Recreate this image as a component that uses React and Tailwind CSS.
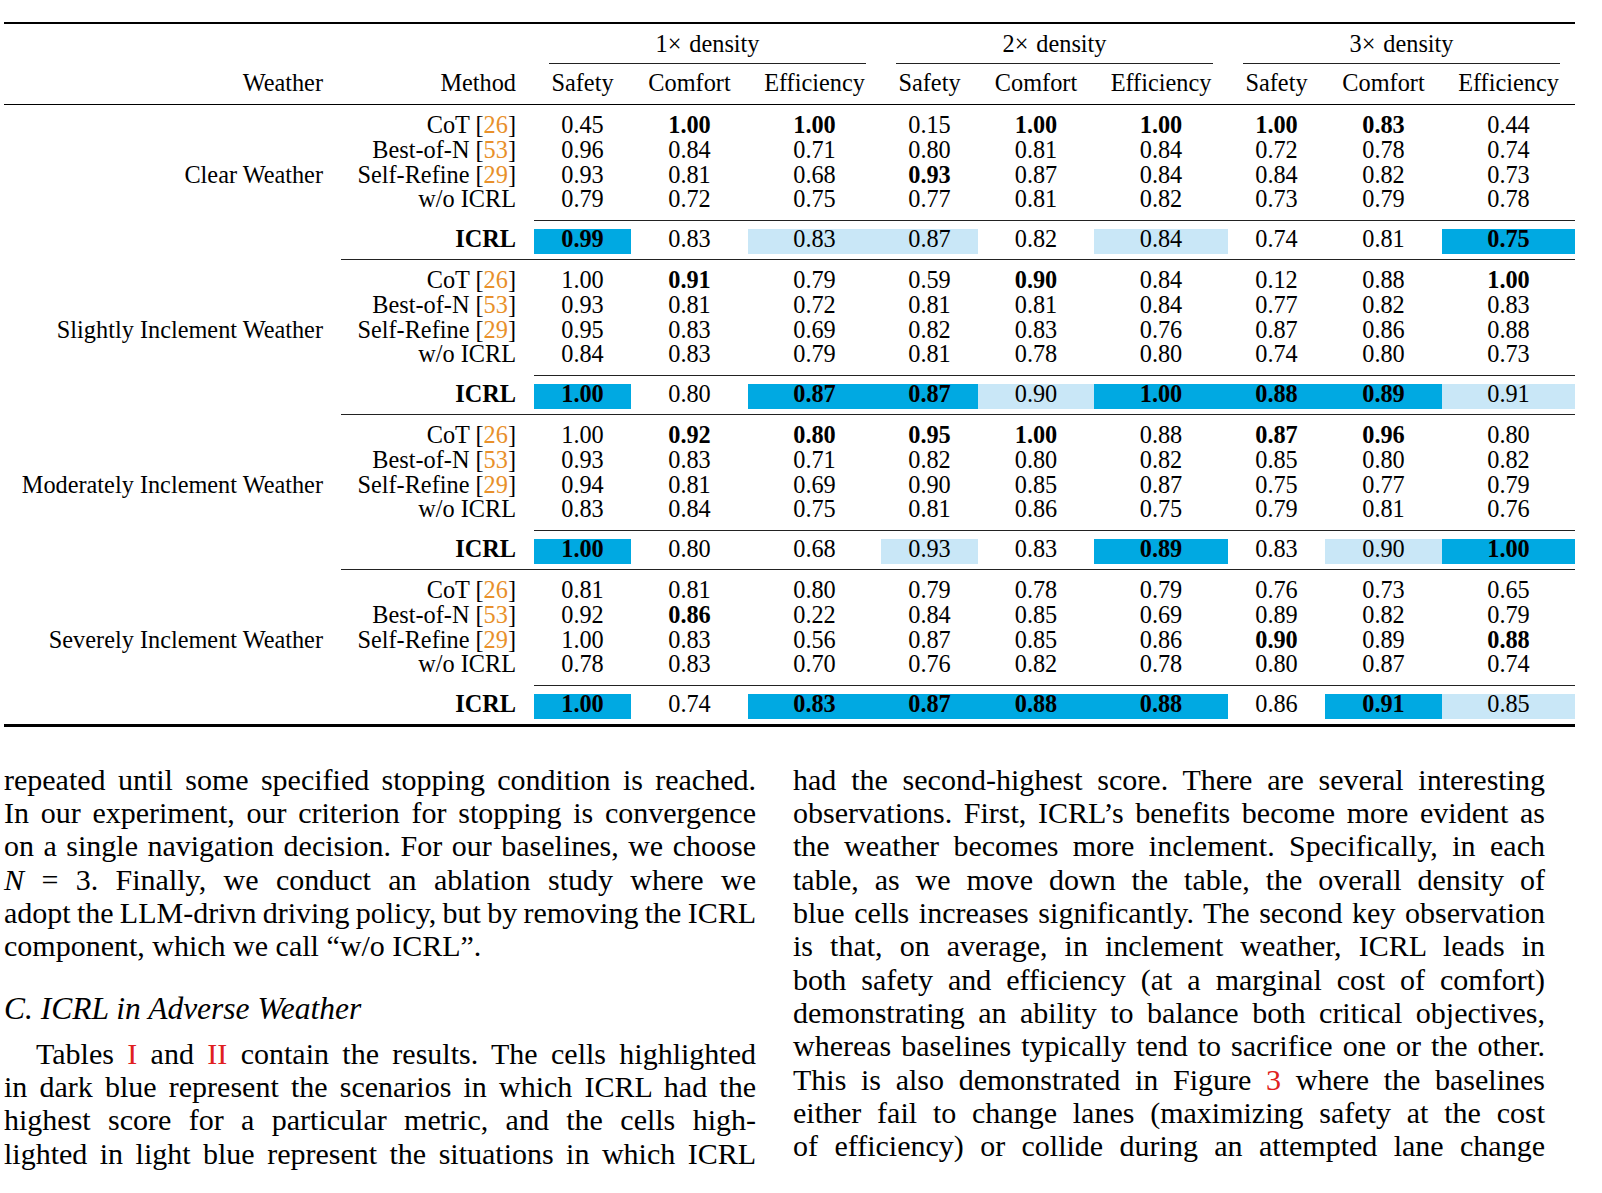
const colW = [
  "w-[97px]",
  "w-[117px]",
  "w-[133px]",
  "w-[97px]",
  "w-[116px]",
  "w-[134px]",
  "w-[97px]",
  "w-[117px]",
  "w-[133px]"
];

const methods = [
  ["CoT", "26"],
  ["Best-of-N", "53"],
  ["Self-Refine", "29"],
  ["w/o ICRL", null]
];

// "*" = bold, "D" = dark blue (bold), "L" = light blue
const groups = [
  {
    name: "Clear Weather",
    rows: [
      ["0.45", "1.00*", "1.00*", "0.15", "1.00*", "1.00*", "1.00*", "0.83*", "0.44"],
      ["0.96", "0.84", "0.71", "0.80", "0.81", "0.84", "0.72", "0.78", "0.74"],
      ["0.93", "0.81", "0.68", "0.93*", "0.87", "0.84", "0.84", "0.82", "0.73"],
      ["0.79", "0.72", "0.75", "0.77", "0.81", "0.82", "0.73", "0.79", "0.78"]
    ],
    icrl: ["0.99D", "0.83", "0.83L", "0.87L", "0.82", "0.84L", "0.74", "0.81", "0.75D"]
  },
  {
    name: "Slightly Inclement Weather",
    rows: [
      ["1.00", "0.91*", "0.79", "0.59", "0.90*", "0.84", "0.12", "0.88", "1.00*"],
      ["0.93", "0.81", "0.72", "0.81", "0.81", "0.84", "0.77", "0.82", "0.83"],
      ["0.95", "0.83", "0.69", "0.82", "0.83", "0.76", "0.87", "0.86", "0.88"],
      ["0.84", "0.83", "0.79", "0.81", "0.78", "0.80", "0.74", "0.80", "0.73"]
    ],
    icrl: ["1.00D", "0.80", "0.87D", "0.87D", "0.90L", "1.00D", "0.88D", "0.89D", "0.91L"]
  },
  {
    name: "Moderately Inclement Weather",
    rows: [
      ["1.00", "0.92*", "0.80*", "0.95*", "1.00*", "0.88", "0.87*", "0.96*", "0.80"],
      ["0.93", "0.83", "0.71", "0.82", "0.80", "0.82", "0.85", "0.80", "0.82"],
      ["0.94", "0.81", "0.69", "0.90", "0.85", "0.87", "0.75", "0.77", "0.79"],
      ["0.83", "0.84", "0.75", "0.81", "0.86", "0.75", "0.79", "0.81", "0.76"]
    ],
    icrl: ["1.00D", "0.80", "0.68", "0.93L", "0.83", "0.89D", "0.83", "0.90L", "1.00D"]
  },
  {
    name: "Severely Inclement Weather",
    rows: [
      ["0.81", "0.81", "0.80", "0.79", "0.78", "0.79", "0.76", "0.73", "0.65"],
      ["0.92", "0.86*", "0.22", "0.84", "0.85", "0.69", "0.89", "0.82", "0.79"],
      ["1.00", "0.83", "0.56", "0.87", "0.85", "0.86", "0.90*", "0.89", "0.88*"],
      ["0.78", "0.83", "0.70", "0.76", "0.82", "0.78", "0.80", "0.87", "0.74"]
    ],
    icrl: ["1.00D", "0.74", "0.83D", "0.87D", "0.88D", "0.88D", "0.86", "0.91D", "0.85L"]
  }
];

const Cite = ({ n }) => (
  <>
    {" "}[<span className="text-[#e8902a]">{n}</span>]
  </>
);

const Ref = ({ children }) => <span className="text-[#e02020]">{children}</span>;

function GroupBlock({ g }) {
  return (
    <div>
      <div className="pt-[8px] pb-[7.7px]">
        {g.rows.map((row, r) => (
          <div key={r} className="flex leading-[24.7px]">
            <div className="w-[337px] text-right pr-[18px] whitespace-nowrap">{r === 2 ? g.name : ""}</div>
            <div className="w-[193px] text-right pr-[18px] whitespace-nowrap">
              {methods[r][0]}
              {methods[r][1] && <Cite n={methods[r][1]} />}
            </div>
            {row.map((v, i) => (
              <div key={i} className={`${colW[i]} text-center ${v.endsWith("*") ? "font-bold" : ""}`}>
                {v.replace("*", "")}
              </div>
            ))}
          </div>
        ))}
      </div>
      <div className="ml-[530px] h-px bg-[#222]" />
      <div className="pt-[8px] pb-[5.5px] flex">
        <div className="w-[337px]" />
        <div className="w-[193px] text-right pr-[18px] font-bold leading-[20px]">ICRL</div>
        {g.icrl.map((v, i) => {
          const dark = v.endsWith("D");
          const light = v.endsWith("L");
          return (
            <div
              key={i}
              className={`${colW[i]} h-[25px] leading-[20px] text-center ${dark ? "bg-[#00a9e2] font-bold" : ""} ${light ? "bg-[#c9e7f7]" : ""}`}
            >
              {v.replace(/[DL]/, "")}
            </div>
          );
        })}
      </div>
    </div>
  );
}

const Line = ({ children, last }) => (
  <div className={last ? "text-left" : "text-justify [text-align-last:justify] [word-spacing:-3px]"}>{children}</div>
);

export default function App() {
  return (
    <div className="w-[1602px] h-[1193px] overflow-hidden bg-white text-black font-['Liberation_Serif',serif]">
      {/* table */}
      <div className="ml-[4px] w-[1571px] pt-[22px] text-[24.3px]">
        <div className="h-[2px] bg-black" />
        <div className="flex pl-[530px] pt-[7.6px] pb-[7.2px] leading-[24.7px]">
          {["1", "2", "3"].map((n) => (
            <div key={n} className="w-[347px] text-center">
              {n}×<span className="ml-[8px]">density</span>
            </div>
          ))}
        </div>
        <div className="flex pl-[530px]">
          {["1", "2", "3"].map((n) => (
            <div key={n} className="w-[347px] px-[15px]">
              <div className="h-px bg-[#222]" />
            </div>
          ))}
        </div>
        <div className="flex pt-[6.5px] pb-[8.2px] leading-[24.7px]">
          <div className="w-[337px] text-right pr-[18px]">Weather</div>
          <div className="w-[193px] text-right pr-[18px]">Method</div>
          {[0, 1, 2].map((k) =>
            ["Safety", "Comfort", "Efficiency"].map((h, i) => (
              <div key={`${k}-${i}`} className={`${colW[k * 3 + i]} text-center`}>
                {h}
              </div>
            ))
          )}
        </div>
        <div className="h-[1.5px] bg-black" />
        {groups.map((g, idx) => (
          <div key={g.name}>
            <GroupBlock g={g} />
            {idx < groups.length - 1 ? (
              <div className="ml-[337px] h-px bg-[#222]" />
            ) : (
              <div className="h-[2.5px] bg-black" />
            )}
          </div>
        ))}
      </div>

      {/* body text */}
      <div className="mt-[36px] ml-[4px] flex gap-[37px] text-[30px] leading-[33.3px]">
        <div className="w-[752px]">
          <Line>repeated until some specified stopping condition is reached.</Line>
          <Line>In our experiment, our criterion for stopping is convergence</Line>
          <Line>on a single navigation decision. For our baselines, we choose</Line>
          <Line>
            <i>N</i> = 3. Finally, we conduct an ablation study where we
          </Line>
          <Line>adopt the LLM-drivn driving policy, but by removing the ICRL</Line>
          <Line last>component, which we call “w/o ICRL”.</Line>
          <div className="mt-[29px] italic text-[31.5px]">C. ICRL in Adverse Weather</div>
          <div className="mt-[11.7px]">
            <Line>
              <span className="ml-[32px]">Tables</span> <Ref>I</Ref> and <Ref>II</Ref> contain the results. The cells highlighted
            </Line>
            <Line>in dark blue represent the scenarios in which ICRL had the</Line>
            <Line>highest score for a particular metric, and the cells high-</Line>
            <Line>lighted in light blue represent the situations in which ICRL</Line>
          </div>
        </div>
        <div className="w-[752px]">
          <Line>had the second-highest score. There are several interesting</Line>
          <Line>observations. First, ICRL’s benefits become more evident as</Line>
          <Line>the weather becomes more inclement. Specifically, in each</Line>
          <Line>table, as we move down the table, the overall density of</Line>
          <Line>blue cells increases significantly. The second key observation</Line>
          <Line>is that, on average, in inclement weather, ICRL leads in</Line>
          <Line>both safety and efficiency (at a marginal cost of comfort)</Line>
          <Line>demonstrating an ability to balance both critical objectives,</Line>
          <Line>whereas baselines typically tend to sacrifice one or the other.</Line>
          <Line>
            This is also demonstrated in Figure <Ref>3</Ref> where the baselines
          </Line>
          <Line>either fail to change lanes (maximizing safety at the cost</Line>
          <Line>of efficiency) or collide during an attempted lane change</Line>
        </div>
      </div>
    </div>
  );
}
